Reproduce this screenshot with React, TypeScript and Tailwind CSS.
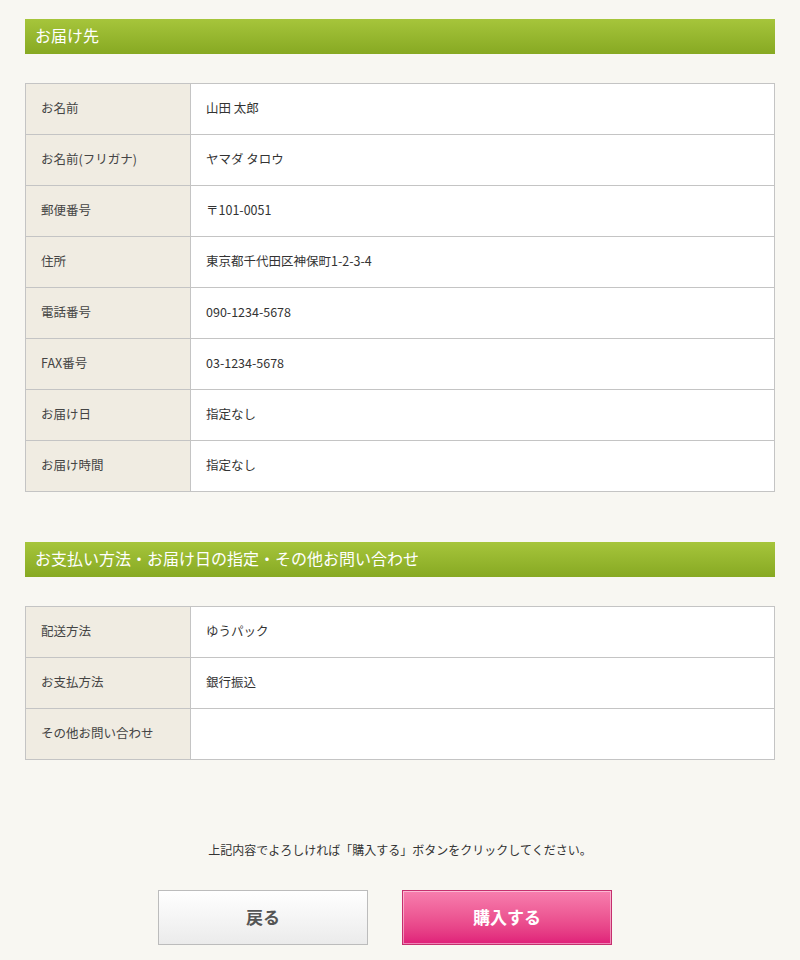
const DELIVERY = [
  { label: "お名前", value: "山田 太郎" },
  { label: "お名前(フリガナ)", value: "ヤマダ タロウ" },
  { label: "郵便番号", value: "〒101-0051" },
  { label: "住所", value: "東京都千代田区神保町1-2-3-4" },
  { label: "電話番号", value: "090-1234-5678" },
  { label: "FAX番号", value: "03-1234-5678" },
  { label: "お届け日", value: "指定なし" },
  { label: "お届け時間", value: "指定なし" },
];

const PAYMENT = [
  { label: "配送方法", value: "ゆうパック" },
  { label: "お支払方法", value: "銀行振込" },
  { label: "その他お問い合わせ", value: "" },
];

function SectionTitle({ children }: { children: React.ReactNode }) {
  return (
    <h2 className="flex h-[35px] items-center bg-gradient-to-b from-[#a6c53b] to-[#87a922] px-[10px] pb-[3px] text-[16px] font-normal text-white">
      {children}
    </h2>
  );
}

function InfoTable({ rows }: { rows: { label: string; value: string }[] }) {
  return (
    <div className="border border-[#c4c4c4] bg-white">
      {rows.map((row, i) => {
        const last = i === rows.length - 1;
        return (
          <div key={row.label} className={last ? "flex h-[50px]" : "flex h-[51px] border-b border-[#c4c4c4]"}>
            <div className="flex w-[165px] shrink-0 items-center border-r border-[#c4c4c4] bg-[#f0ece2] pb-[2px] pl-[15px] text-[12.5px] text-[#444]">
              {row.label}
            </div>
            <div className="flex flex-1 items-center pb-[2px] pl-[15px] text-[12.5px] text-[#333]">{row.value}</div>
          </div>
        );
      })}
    </div>
  );
}

export default function App() {
  return (
    <main
      className="min-h-[960px] bg-[#f8f7f2] px-[25px] pt-[19px] pb-[15px] text-[#333]"
      style={{ fontFamily: '"Noto Sans CJK JP", "Noto Sans", sans-serif' }}
    >
      <SectionTitle>お届け先</SectionTitle>
      <div className="mt-[29px]">
        <InfoTable rows={DELIVERY} />
      </div>

      <div className="mt-[50px]">
        <SectionTitle>お支払い方法・お届け日の指定・その他お問い合わせ</SectionTitle>
      </div>
      <div className="mt-[29px]">
        <InfoTable rows={PAYMENT} />
      </div>

      <p className="mt-[81px] text-center text-[12px] leading-[18px] text-[#333]">
        上記内容でよろしければ「購入する」ボタンをクリックしてください。
      </p>

      <div className="mt-[31px] flex justify-center gap-[34px] pr-[30px]">
        <button className="h-[55px] w-[210px] border border-[#bcbcbc] bg-gradient-to-b from-white to-[#ebebeb] pb-[2px] text-[17px] font-bold text-[#555]">
          戻る
        </button>
        <button className="h-[55px] w-[210px] border border-[#c52f6e] bg-gradient-to-b from-[#f77eae] to-[#e01d79] pb-[2px] text-[17px] font-bold text-white shadow-[inset_0_0_0_1px_rgba(255,255,255,0.45)]">
          購入する
        </button>
      </div>
    </main>
  );
}
